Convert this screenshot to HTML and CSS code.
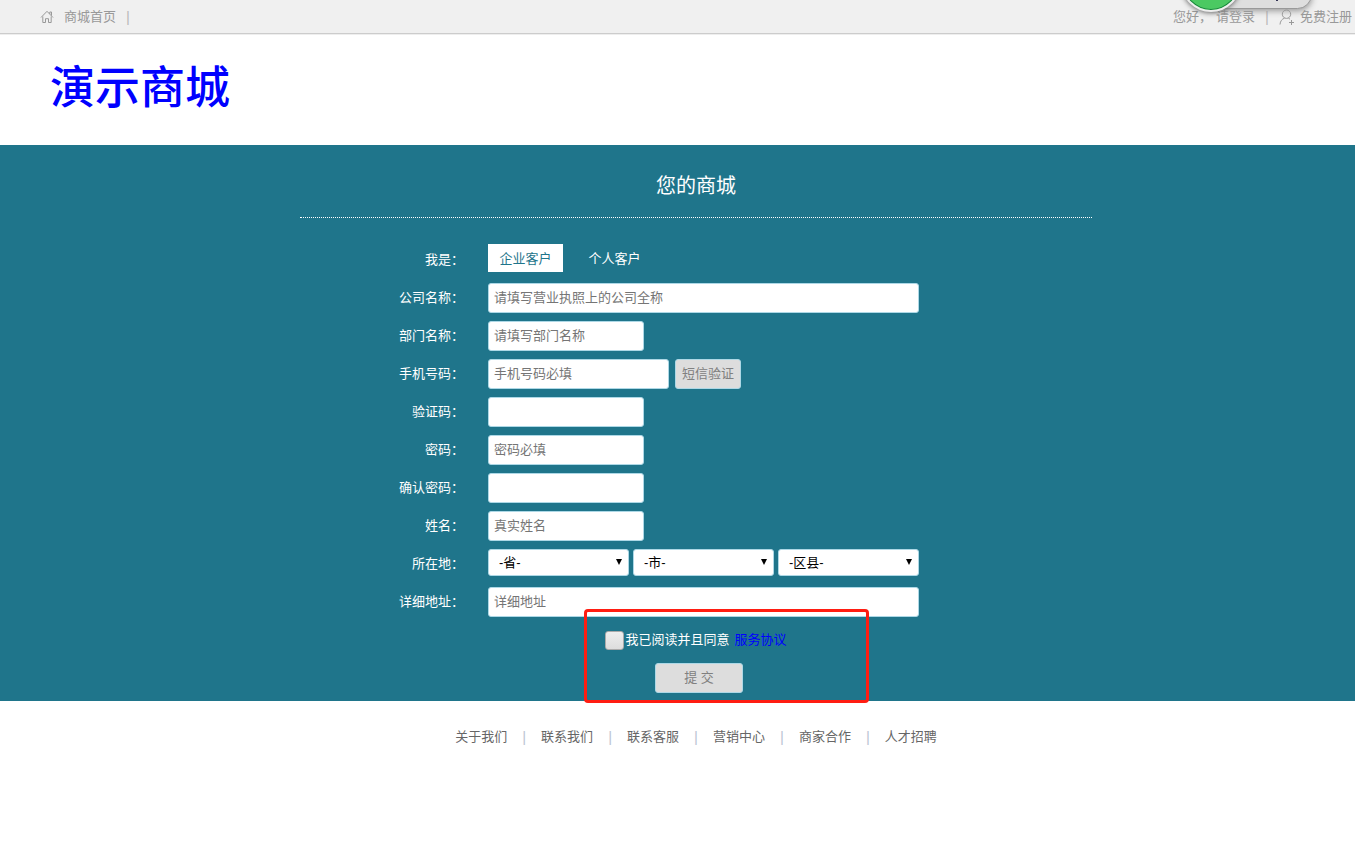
FILE: index.html
```html
<!DOCTYPE html>
<html lang="zh-CN">
<head>
<meta charset="utf-8">
<title>演示商城</title>
<link rel="stylesheet" href="styles.css">
</head>
<body>
<nav class="topbar">
  <a class="home" href="#">
    <svg class="icon-home" viewBox="0 0 14 14"><path d="M1 7.5 7 1.3 13 7.5M9.8 4V2h1.7v3.6M2.8 6.5v6h2.7V8.7h3v3.8h2.7v-6"/></svg>
    商城首页
  </a>
  <span class="bar">|</span>
  <div class="account">
    <span>您好，</span>
    <a href="#">请登录</a>
    <span class="bar">|</span>
    <a class="register" href="#">
      <svg class="icon-user" viewBox="0 0 16 17"><circle cx="7.5" cy="5.2" r="4.2"/><path d="M1 15.5C1.300 12 3 10 5.500 9.200M9.500 9.200 11 10.200M12.500 11v5M10 13.500h5"/></svg>
      免费注册
    </a>
  </div>
  <div class="widget" aria-hidden="true">
    <div class="widget-pill"></div>
    <div class="widget-ball"></div>
  </div>
</nav>
<header class="brand"><h1 class="logo">演示商城</h1></header>
<main class="panel">
  <form class="form">
    <h2 class="title">您的商城</h2>
    <div class="rows">
      <div class="row">
        <span class="label">我是：</span>
        <div class="tabs">
          <button type="button" class="tab tab-active">企业客户</button>
          <button type="button" class="tab">个人客户</button>
        </div>
      </div>
      <div class="row">
        <label class="label" for="company">公司名称：</label>
        <input class="field wide" id="company" type="text" placeholder="请填写营业执照上的公司全称">
      </div>
      <div class="row">
        <label class="label" for="dept">部门名称：</label>
        <input class="field" id="dept" type="text" placeholder="请填写部门名称">
      </div>
      <div class="row">
        <label class="label" for="phone">手机号码：</label>
        <input class="field medium" id="phone" type="tel" placeholder="手机号码必填">
        <button type="button" class="button sms">短信验证</button>
      </div>
      <div class="row">
        <label class="label" for="code">验证码：</label>
        <input class="field" id="code" type="text">
      </div>
      <div class="row">
        <label class="label" for="password">密码：</label>
        <input class="field" id="password" type="password" placeholder="密码必填">
      </div>
      <div class="row">
        <label class="label" for="confirm">确认密码：</label>
        <input class="field" id="confirm" type="password">
      </div>
      <div class="row">
        <label class="label" for="name">姓名：</label>
        <input class="field" id="name" type="text" placeholder="真实姓名">
      </div>
      <div class="row">
        <label class="label" for="province">所在地：</label>
        <div class="region">
          <div class="pick"><select class="select" id="province"><option>-省-</option></select></div>
          <div class="pick"><select class="select" aria-label="市"><option>-市-</option></select></div>
          <div class="pick"><select class="select" aria-label="区县"><option>-区县-</option></select></div>
        </div>
      </div>
      <div class="row">
        <label class="label" for="address">详细地址：</label>
        <input class="field wide" id="address" type="text" placeholder="详细地址">
      </div>
      <div class="row center">
        <input class="check" id="agree" type="checkbox">
        <label for="agree">我已阅读并且同意</label>
        <a class="terms" href="#">服务协议</a>
      </div>
      <div class="row center">
        <button type="submit" class="button submit">提 交</button>
      </div>
    </div>
    <div class="highlight"></div>
  </form>
</main>
<footer class="footer">
  <a href="#">关于我们</a><span>|</span>
  <a href="#">联系我们</a><span>|</span>
  <a href="#">联系客服</a><span>|</span>
  <a href="#">营销中心</a><span>|</span>
  <a href="#">商家合作</a><span>|</span>
  <a href="#">人才招聘</a>
</footer>
</body>
</html>
```
FILE: styles.css
```css
* { box-sizing: border-box; }
body {
  margin: 0;
  background: #fff;
  font: 13px/20px "Liberation Sans", "Noto Sans CJK SC", sans-serif;
  color: #666;
}
a { color: inherit; text-decoration: none; }
button, input, select { font: inherit; margin: 0; }

.topbar {
  position: relative;
  display: flex;
  align-items: center;
  height: 35px;
  padding: 0 3px 0 40px;
  background: #f0f0f0;
  border-bottom: 1px solid #eee;
  box-shadow: inset 0 -1px #ccc;
  color: #999;
  overflow: hidden;
}
.home { display: flex; align-items: center; gap: 10px; }
.bar { margin: 0 10px; color: #bbb; font-size: 15px; }
.icon-home, .icon-user { fill: none; stroke: #999; stroke-width: 1; }
.icon-home { width: 14px; height: 14px; }
.icon-user { width: 16px; height: 17px; }
.account { display: flex; align-items: center; margin-left: auto; }
.account > a:first-of-type { margin-left: 4px; }
.register { display: flex; align-items: center; gap: 5px; }

.widget { position: absolute; top: 0; right: 43px; width: 131px; height: 34px; }
.widget-pill {
  position: absolute;
  top: -20px;
  right: 0;
  width: 102px;
  height: 29px;
  border: 1px solid #999;
  border-radius: 15px;
  background: #dedede;
  box-shadow: 0 2px 6px #999;
}
.widget-pill::after {
  content: "";
  position: absolute;
  left: 65px;
  bottom: 7px;
  width: 2px;
  height: 1px;
  background: #335;
}
.widget-ball {
  position: absolute;
  top: -48px;
  left: 0;
  width: 60px;
  height: 60px;
  border: 2px solid #eee;
  border-radius: 50%;
  background: #4bc962;
  box-shadow: inset 0 0 0 1px #16803a, 0 1px 5px #666;
}

.brand { padding: 22px 50px 24px; }
.logo { margin: 0; font-size: 45px; line-height: 64px; font-weight: 500; color: #00f; }

.panel { padding: 0 0 4px 37px; background: #1f758b; color: #fff; }
.form { position: relative; width: 792px; max-width: 100%; margin: 0 auto; }
.title {
  margin: 0;
  padding: 29px 0 19px;
  border-bottom: 1px dotted #fff;
  font-size: 20px;
  line-height: 24px;
  font-weight: 400;
  text-align: center;
}
.rows { padding-top: 23px; }
.row { display: flex; align-items: center; height: 38px; }
.label { width: 164px; margin-right: 24px; text-align: right; }
.tabs { display: flex; gap: 14px; padding-bottom: 4px; }
.tab {
  width: 75px;
  height: 28px;
  padding: 2px 0 0;
  border: 0;
  background: transparent;
  color: #fff;
}
.tab-active { background: #fff; color: #1f758b; }
.field {
  width: 156px;
  height: 30px;
  padding: 0 5px 2px;
  border: 1px solid #add8e6;
  border-radius: 3px;
  background: #fff;
  color: #333;
}
.field::placeholder { color: #757575; }
.wide { width: 431px; }
.medium { width: 181px; }
.button {
  height: 30px;
  padding: 0;
  border: 1px solid #add8e6;
  border-radius: 3px;
  background: #ddd;
  color: #808080;
}
.sms { width: 66px; margin-left: 6px; }
.region { display: flex; gap: 4px; padding-bottom: 3px; }
.pick { position: relative; }
.pick::after {
  content: "";
  position: absolute;
  top: 10px;
  right: 7px;
  border: solid transparent;
  border-width: 6px 3px 0;
  border-top-color: #000;
  pointer-events: none;
}
.select {
  display: block;
  appearance: none;
  width: 141px;
  height: 27px;
  padding: 0 10px;
  border: 1px solid #add8e6;
  border-radius: 3px;
  background: #fff;
  color: #000;
}
.center { justify-content: center; }
.check {
  appearance: none;
  width: 19px;
  height: 19px;
  margin-right: 1px;
  border: 1px solid #aaa;
  border-radius: 3px;
  background: linear-gradient(#eee, #ddd);
}
.terms { margin-left: 5px; color: #00f; }
.submit { width: 88px; margin-left: 6px; }
.highlight {
  position: absolute;
  top: 464px;
  left: 284px;
  width: 285px;
  height: 94px;
  border: 3px solid #ff1d12;
  border-radius: 4px;
  pointer-events: none;
}

.footer {
  display: flex;
  justify-content: center;
  gap: 15px;
  padding: 26px 0 26px 37px;
}
.footer span { color: #bcc4d4; font-size: 15px; }
```
